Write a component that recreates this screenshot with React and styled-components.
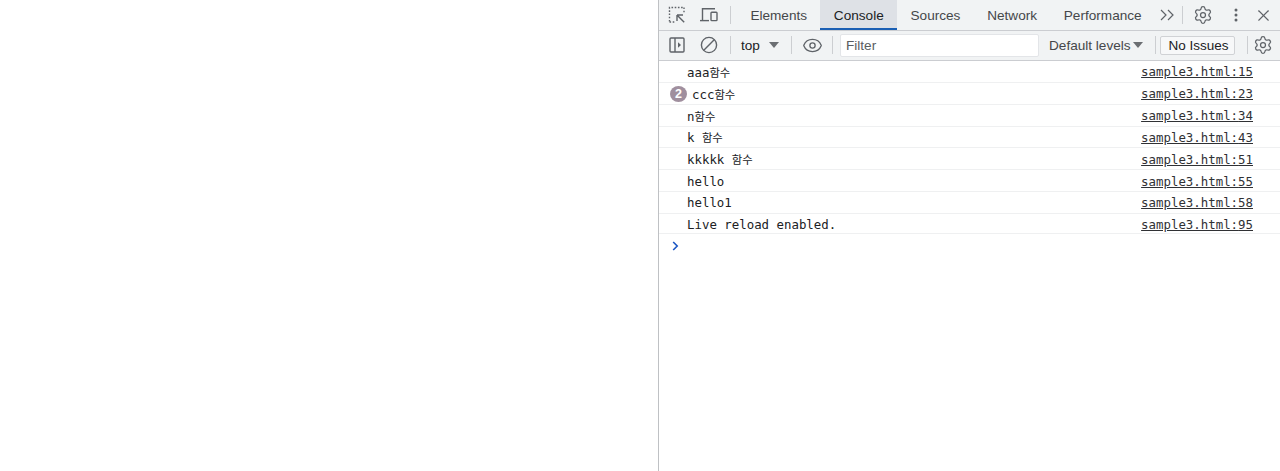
import React from "react";
import styled, { createGlobalStyle } from "styled-components";
import { Settings, X, Eye } from "lucide-react";

const Global = createGlobalStyle`
  html, body { margin: 0; padding: 0; background: #fff; height: 100%; }
  #root { height: 100%; }
`;
const Page = styled.div`
  width: 1280px; height: 471px; display: flex; justify-content: flex-end; overflow: hidden; background: #fff;
`;
const Panel = styled.div`
  width: 621px; height: 471px; border-left: 1px solid #bfc1c4; background: #fff;
  display: flex; flex-direction: column; font-family: "Liberation Sans", Arial, sans-serif; box-sizing: content-box;
`;
const TabBar = styled.div`
  height: 30px; background: #f1f3f4; border-bottom: 1px solid #cbcdd1; display: flex; align-items: stretch; flex: none; box-sizing: content-box;
`;
const SubBar = styled.div`
  height: 28px; padding-bottom: 1px; background: #f1f3f4; border-bottom: 1px solid #cbcdd1; display: flex; align-items: center; flex: none; box-sizing: content-box;
`;
const IconSlot = styled.div`
  width: ${p => p.$w || 32}px; flex: none; display: flex; align-items: center; justify-content: center; color: #5f6368;
  padding-left: ${p => p.$pl || 0}px; box-sizing: border-box;
`;
const Divider = styled.div`
  width: 1px; height: 18px; background: #ccced1; flex: none; align-self: center; margin-left: ${p => p.$ml || 0}px;
`;
const Tab = styled.div`
  padding: 0 13.4px; display: flex; align-items: center; font-size: 13.6px; color: ${p => p.$active ? "#202124" : "#45474a"};
  background: ${p => p.$active ? "#dee1e6" : "transparent"};
  box-shadow: ${p => p.$active ? "inset 0 -2px 0 #1a5fb4" : "none"};
  white-space: nowrap; margin-left: ${p => p.$ml || 0}px;
`;
const Context = styled.div`
  display: flex; align-items: center; font-size: 13.6px; color: #202124; margin-left: 10px; width: 38px; justify-content: space-between; flex: none;
`;
const Caret = styled.span`
  width: 0; height: 0; border-left: 5px solid transparent; border-right: 5px solid transparent; border-top: 6px solid #6b6e72; display: inline-block; flex: none;
`;
const Filter = styled.div`
  height: 21px; width: 192px; margin-left: 7px; background: #fff; border: 1px solid #e3e5e8; border-radius: 2px; padding-left: 5px;
  font-size: 13.6px; color: #5a5d61; display: flex; align-items: center; box-sizing: content-box; flex: none;
`;
const Levels = styled.div`
  display: flex; align-items: center; justify-content: space-between; font-size: 13.6px; color: #45474a; margin-left: 10px; flex: none; width: 94px; white-space: nowrap;
`;
const IssuesBtn = styled.div`
  height: 17px; width: 71px; padding-left: 2px; box-sizing: content-box; border: 1px solid #d0d2d5; border-radius: 2px; background: #f7f8f9; font-size: 13.5px; color: #202124;
  display: flex; align-items: center; justify-content: center; margin-left: 4px; flex: none;
`;
const Log = styled.div`display: flex; flex-direction: column; flex: none;`;
const Row = styled.div`
  height: ${p => p.$h || 21.85}px; box-sizing: border-box; border-bottom: 1px solid #eff0f1; display: flex; align-items: center;
  padding: 1px 27px 0 ${p => p.$badge ? 11 : 28}px;
  font-family: "DejaVu Sans Mono", "Noto Sans CJK KR", monospace; font-size: 12.4px; color: #202124; white-space: pre;
`;
const Badge = styled.span`
  width: 17px; height: 16px; border-radius: 50%; background: #a08f9e; color: #fff; font-family: "Liberation Sans", sans-serif; font-weight: 700; font-size: 12.5px;
  display: flex; align-items: center; justify-content: center; margin-right: 5px; flex: none;
`;
const Message = styled.span`flex: 1;`;
const Hangul = styled.span`font-family: "Noto Sans CJK KR", sans-serif; font-size: 11.35px;`;
const Source = styled.span`text-decoration: underline; color: #303134;`;
const Prompt = styled.div`
  height: 22px; display: flex; align-items: center; padding: 1px 0 0 13px; flex: none; box-sizing: border-box;
`;

const rows = [
  ["aaa", "함수", "15"], ["ccc", "함수", "23", 2], ["n", "함수", "34"], ["k ", "함수", "43"],
  ["kkkkk ", "함수", "51"], ["hello", "", "55"], ["hello1", "", "58"], ["Live reload enabled.", "", "95", 0, 20.5],
];

const Inspect = () => (
  <svg width="18" height="18" viewBox="0 0 18 18" fill="none" stroke="#5f6368" strokeWidth="1.4">
    <path d="M1.5 15.5v-14h14" strokeDasharray="1.6 1.6" />
    <path d="M16 1.5v6" strokeDasharray="1.6 1.6" />
    <path d="M1.5 16h5" strokeDasharray="1.6 1.6" />
    <path d="M9 9h6M9 9v6M9.2 9.2l7 7" />
  </svg>
);
const Device = () => (
  <svg width="20" height="18" viewBox="0 0 20 18" fill="none" stroke="#5f6368" strokeWidth="1.4">
    <path d="M3.5 14V2.7h12.5" />
    <path d="M1 14.6h9" />
    <rect x="12" y="6.2" width="6" height="8.4" rx="0.8" />
  </svg>
);
const Sidebar = () => (
  <svg width="16" height="16" viewBox="0 0 16 16" fill="none" stroke="#5f6368" strokeWidth="1.4">
    <rect x="1" y="1" width="14" height="14" rx="1" />
    <path d="M6 1v14" />
    <path d="M9 5.2l3 2.8-3 2.8z" fill="#5f6368" stroke="none" />
  </svg>
);
const Clear = () => (
  <svg width="18" height="18" viewBox="0 0 18 18" fill="none" stroke="#5f6368" strokeWidth="1.4">
    <circle cx="9" cy="9" r="7.6" />
    <path d="M3.8 14.2 14.2 3.8" />
  </svg>
);
const Dots = () => (
  <svg width="4" height="14" viewBox="0 0 4 14" fill="#5f6368">
    <circle cx="2" cy="2" r="1.5" /><circle cx="2" cy="7" r="1.5" /><circle cx="2" cy="12" r="1.5" />
  </svg>
);
const More = () => (
  <svg width="15" height="12" viewBox="0 0 15 12" fill="none" stroke="#5f6368" strokeWidth="1.2">
    <path d="M1 1l5 5-5 5M8 1l5 5-5 5" />
  </svg>
);
const PromptArrow = () => (
  <svg width="7" height="10" viewBox="0 0 7 10" fill="none" stroke="#1a56c4" strokeWidth="1.6">
    <path d="M1.2 1l4 4-4 4" />
  </svg>
);

export default function App() {
  return (
    <Page>
      <Global />
      <Panel>
        <TabBar>
          <IconSlot $w={36}><Inspect /></IconSlot>
          <IconSlot $w={28}><Device /></IconSlot>
          <Divider $ml={7} />
          <Tab $ml={6}>Elements</Tab>
          <Tab $active>Console</Tab>
          <Tab>Sources</Tab>
          <Tab>Network</Tab>
          <Tab>Performance</Tab>
          <IconSlot $w={24} $pl={1}><More /></IconSlot>
          <Divider $ml={3} />
          <IconSlot $w={40}><Settings size={20} strokeWidth={1.5} /></IconSlot>
          <IconSlot $w={25}><Dots /></IconSlot>
          <IconSlot $w={30}><X size={19} strokeWidth={1.4} /></IconSlot>
        </TabBar>
        <SubBar>
          <IconSlot $w={36}><Sidebar /></IconSlot>
          <IconSlot $w={28}><Clear /></IconSlot>
          <Divider $ml={7} />
          <Context>top<Caret /></Context>
          <Divider $ml={12} />
          <IconSlot $w={40}><Eye size={21} strokeWidth={1.5} /></IconSlot>
          <Divider />
          <Filter>Filter</Filter>
          <Levels>Default levels<Caret /></Levels>
          <Divider $ml={12} />
          <IssuesBtn>No Issues</IssuesBtn>
          <Divider $ml={12} />
          <IconSlot $w={30}><Settings size={20} strokeWidth={1.5} /></IconSlot>
        </SubBar>
        <Log>
          {rows.map(([msg, kr, line, badge, h]) => (
            <Row key={line} $badge={badge} $h={h}>
              {badge ? <Badge>{badge}</Badge> : null}
              <Message>{msg}{kr ? <Hangul>{kr}</Hangul> : null}</Message>
              <Source>sample3.html:{line}</Source>
            </Row>
          ))}
        </Log>
        <Prompt><PromptArrow /></Prompt>
      </Panel>
    </Page>
  );
}
